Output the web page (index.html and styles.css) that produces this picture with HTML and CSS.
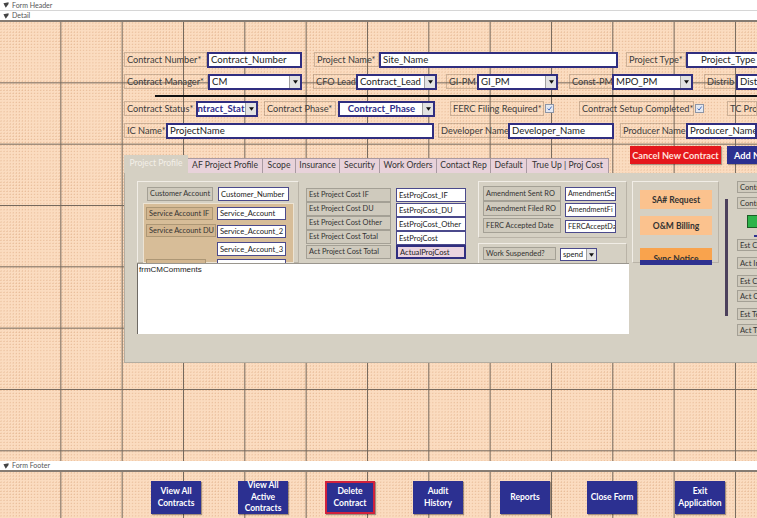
FILE: index.html
```html
<!DOCTYPE html>
<html>
<head>
<meta charset="utf-8">
<title>Contract Form - Design View</title>
<link rel="stylesheet" href="styles.css">
</head>
<body>
<div class="designer">
  <div class="bar"><svg class="sec-ico" viewBox="0 0 7 7"><path d="M0.5 1.5 L6.5 0.3 L6.5 2.2 L3.2 6.6 Z" fill="#444"/></svg>Form Header</div>
  <div class="bar strong"><svg class="sec-ico" viewBox="0 0 7 7"><path d="M0.5 1.5 L6.5 0.3 L6.5 2.2 L3.2 6.6 Z" fill="#444"/></svg>Detail</div>

  <div class="canvas detail">
    <!-- row 1 -->
    <div class="c lbl l-cnum">Contract Number*</div>
    <div class="c txt t-cnum">Contract_Number</div>
    <div class="c lbl l-pname">Project Name*</div>
    <div class="c txt t-site">Site_Name</div>
    <div class="c lbl l-ptype">Project Type*</div>
    <div class="c txt t-ptype">Project_Type</div>

    <!-- row 2 -->
    <div class="c lbl l-cm">Contract Manager*</div>
    <div class="c txt cbo c-cm">CM<span class="dd"><svg viewBox="0 0 6 4"><path d="M0 0H6L3 4Z" fill="#111"/></svg></span></div>
    <div class="c lbl l-cfo">CFO Lead</div>
    <div class="c txt cbo c-lead">Contract_Lead<span class="dd"><svg viewBox="0 0 6 4"><path d="M0 0H6L3 4Z" fill="#111"/></svg></span></div>
    <div class="c lbl l-gipm">GI-PM</div>
    <div class="c txt cbo c-gipm">GI_PM<span class="dd"><svg viewBox="0 0 6 4"><path d="M0 0H6L3 4Z" fill="#111"/></svg></span></div>
    <div class="c lbl l-cpm">Const-PM</div>
    <div class="c txt cbo c-mpo">MPO_PM<span class="dd"><svg viewBox="0 0 6 4"><path d="M0 0H6L3 4Z" fill="#111"/></svg></span></div>
    <div class="c lbl l-dist">Distrib</div>
    <div class="c txt t-dist">Distri</div>

    <div class="c hline"></div>

    <!-- row 3 -->
    <div class="c lbl l-cstat">Contract Status*</div>
    <div class="c txt cbo navy c-cstat"><span class="shift">ontract_Stat</span><span class="dd"><svg viewBox="0 0 6 4"><path d="M0 0H6L3 4Z" fill="#111"/></svg></span></div>
    <div class="c lbl l-cphase">Contract Phase*</div>
    <div class="c txt cbo navy center c-cphase">Contract_Phase<span class="dd"><svg viewBox="0 0 6 4"><path d="M0 0H6L3 4Z" fill="#111"/></svg></span></div>
    <div class="c lbl l-ferc">FERC Filing Required*</div>
    <div class="c chk chk-ferc"><svg viewBox="0 0 9 9"><path d="M2 4.5 L4 6.5 L7.2 2" stroke="#3a63b8" stroke-width="1.2" fill="none"/></svg></div>
    <div class="c lbl l-setup">Contract Setup Completed*</div>
    <div class="c chk chk-setup"><svg viewBox="0 0 9 9"><path d="M2 4.5 L4 6.5 L7.2 2" stroke="#3a63b8" stroke-width="1.2" fill="none"/></svg></div>
    <div class="c lbl l-tc">TC Pro</div>

    <!-- row 4 -->
    <div class="c lbl l-ic">IC Name*</div>
    <div class="c txt t-ic">ProjectName</div>
    <div class="c lbl l-dev">Developer Name</div>
    <div class="c txt t-dev">Developer_Name</div>
    <div class="c lbl l-prod">Producer Name</div>
    <div class="c txt t-prod">Producer_Name</div>

    <div class="c btn b-cancel">Cancel New Contract</div>
    <div class="c btn b-add">Add N</div>

    <!-- tab control -->
    <div class="c tabctl">
      <div class="tabstrip">
        <div class="tab sel w-pp">Project Profile</div>
        <div class="tab w-af">AF Project Profile</div>
        <div class="tab w-sc">Scope</div>
        <div class="tab w-in">Insurance</div>
        <div class="tab w-se">Security</div>
        <div class="tab w-wo">Work Orders</div>
        <div class="tab w-cr">Contact Rep</div>
        <div class="tab w-de">Default</div>
        <div class="tab w-tu">True Up | Proj Cost</div>
      </div>
      <div class="tabpage">
        <div class="c frame fr-a"></div>
        <div class="c plbl p-cust">Customer Account</div>
        <div class="c ptxt pt-cust">Customer_Number</div>

        <div class="c tan"></div>
        <div class="c plbl tanlbl p-sif">Service Account IF</div>
        <div class="c plbl tanlbl p-sdu">Service Account DU</div>
        <div class="c plbl tanlbl p-s4"></div>
        <div class="c ptxt pt-s1">Service_Account</div>
        <div class="c ptxt pt-s2">Service_Account_2</div>
        <div class="c ptxt pt-s3">Service_Account_3</div>
        <div class="c ptxt pt-s4"></div>

        <div class="c plbl p-m1">Est Project Cost IF</div>
        <div class="c plbl p-m2">Est Project Cost DU</div>
        <div class="c plbl p-m3">Est Project Cost Other</div>
        <div class="c plbl p-m4">Est Project Cost Total</div>
        <div class="c plbl p-m5">Act Project Cost Total</div>
        <div class="c ptxt pt-m1">EstProjCost_IF</div>
        <div class="c ptxt pt-m2">EstProjCost_DU</div>
        <div class="c ptxt pt-m3">EstProjCost_Other</div>
        <div class="c ptxt pt-m4">EstProjCost</div>
        <div class="c ptxt pink pt-m5">ActualProjCost</div>

        <div class="c frame fr-b"></div>
        <div class="c plbl p-a1">Amendment Sent RO</div>
        <div class="c plbl p-a2">Amendment Filed RO</div>
        <div class="c plbl p-a3">FERC Accepted Date</div>
        <div class="c ptxt small pt-a1">AmendmentSe</div>
        <div class="c ptxt small pt-a2">AmendmentFi</div>
        <div class="c ptxt small pt-a3">FERCAcceptDa</div>

        <div class="c frame fr-c"></div>
        <div class="c plbl p-ws">Work Suspended?</div>
        <div class="c ptxt pcbo pt-ws">spend<span class="dd"><svg viewBox="0 0 6 4"><path d="M0 0H6L3 4Z" fill="#111"/></svg></span></div>

        <div class="c frame fr-d"></div>
        <div class="c obtn ob-sa">SA# Request</div>
        <div class="c obtn ob-om">O&amp;M Billing</div>
        <div class="c obtn sync ob-sy">Sync Notice</div>
        <div class="c navybar"></div>

        <div class="c vline"></div>

        <div class="c plbl r-1">Contra</div>
        <div class="c plbl r-2">Contra</div>
        <div class="c greenbtn"></div>
        <div class="c dash"></div>
        <div class="c plbl r-3">Est Co</div>
        <div class="c plbl r-4">Act In</div>
        <div class="c plbl r-5">Est CO</div>
        <div class="c plbl r-6">Act CO</div>
        <div class="c plbl r-7">Est Te</div>
        <div class="c plbl r-8">Act Te</div>

        <div class="c comments">frmCMComments</div>
      </div>
    </div>
  </div>

  <div class="bar strong"><svg class="sec-ico" viewBox="0 0 7 7"><path d="M0.5 1.5 L6.5 0.3 L6.5 2.2 L3.2 6.6 Z" fill="#444"/></svg>Form Footer</div>

  <div class="canvas footer">
    <div class="c fb f1">View All<br>Contracts</div>
    <div class="c fb f2">View All<br>Active<br>Contracts</div>
    <div class="c fb del f3">Delete<br>Contract</div>
    <div class="c fb f4">Audit<br>History</div>
    <div class="c fb f5">Reports</div>
    <div class="c fb f6">Close Form</div>
    <div class="c fb f7">Exit<br>Application</div>
  </div>
</div>
</body>
</html>
```

FILE: styles.css
```css
* { box-sizing: border-box; margin: 0; padding: 0; }
html, body { width: 757px; height: 518px; overflow: hidden; background: #fff; }
body { font-family: Lato, "Liberation Sans", sans-serif; color: #333; }

.designer { display: flex; flex-direction: column; width: 757px; height: 518px; }

.bar {
  flex: 0 0 11px; height: 11px; background: #fff;
  border-bottom: 1px solid #d6d6d6;
  display: flex; align-items: center; gap: 3px; padding-left: 3px;
  font-size: 7px; color: #555; line-height: 1;
}
.bar.strong { border-bottom: 2px solid #867c73; }
.sec-ico { width: 6px; height: 6px; }

.canvas {
  position: relative; overflow: hidden; flex-shrink: 0;
  background-color: #fbdcc0;
  background-image:
    linear-gradient(to right, transparent 60.33px, #74685c 60.33px, #74685c 61.33px, transparent 61.33px),
    linear-gradient(to bottom, transparent 60.33px, #74685c 60.33px, #74685c 61.33px, transparent 61.33px),
    radial-gradient(circle at 1px 1px, rgba(215,160,118,.55) 0.55px, transparent 0.85px);
  background-size: 61.333px 61.333px, 61.333px 61.333px, 3.0667px 3.0667px;
}
.detail { height: 439px; }
.footer { height: 46px; }

.c { position: absolute; white-space: nowrap; overflow: hidden; }

/* labels / textboxes on the form canvas */
.lbl {
  height: 15px; border: 1px solid rgba(120,100,80,.35);
  font-size: 9.2px; line-height: 13px; padding: 0 2px; color: #3d3d3d;
}
.txt {
  height: 16px; background: #fff; border: 2px solid #302e80;
  font-size: 9.6px; line-height: 12px; padding: 0 2px; color: #222;
}
.cbo { padding-right: 12px; }
.dd {
  position: absolute; right: 0; top: 0; bottom: 0; width: 11px;
  background: #e2e2e2; border-left: 1px solid #a0a0a0;
  display: flex; align-items: center; justify-content: center;
}
.dd svg { width: 5px; height: 4px; }
.navy { color: #2f2d8a; font-weight: bold; }
.center { text-align: center; }
.shift { display: inline-block; margin-left: -8px; }

.chk {
  width: 9px; height: 9px; background: #e4e8f0; border: 1px solid #8d95a6;
}
.chk svg { width: 7px; height: 7px; display: block; }

.hline { left: 155px; top: 73px; width: 610px; height: 2px; background: #111; }

/* row 1 */
.l-cnum { left: 124px; top: 30px; width: 83px; }
.t-cnum { left: 207px; top: 30px; width: 95px; }
.l-pname { left: 314px; top: 30px; width: 65px; }
.t-site { left: 379px; top: 30px; width: 239px; }
.l-ptype { left: 626px; top: 30px; width: 60px; }
.t-ptype { left: 686px; top: 30px; width: 80px; padding-left: 13px; }
/* row 2 */
.l-cm { left: 124px; top: 52px; width: 84px; }
.c-cm { left: 208px; top: 52px; width: 94px; }
.l-cfo { left: 313px; top: 52px; width: 44px; }
.c-lead { left: 356px; top: 52px; width: 81px; }
.l-gipm { left: 446px; top: 52px; width: 32px; }
.c-gipm { left: 477px; top: 52px; width: 81px; }
.l-cpm { left: 569px; top: 52px; width: 44px; }
.c-mpo { left: 612px; top: 52px; width: 81px; }
.l-dist { left: 704px; top: 52px; width: 33px; }
.t-dist { left: 736px; top: 52px; width: 40px; }
/* row 3 */
.l-cstat { left: 124px; top: 79px; width: 73px; }
.c-cstat { left: 196px; top: 79px; width: 62px; }
.l-cphase { left: 264px; top: 79px; width: 72px; }
.c-cphase { left: 338px; top: 79px; width: 97px; }
.l-ferc { left: 450px; top: 79px; width: 94px; }
.chk-ferc { left: 545px; top: 82px; }
.l-setup { left: 579px; top: 79px; width: 115px; }
.chk-setup { left: 695px; top: 82px; }
.l-tc { left: 727px; top: 79px; width: 30px; }
/* row 4 */
.l-ic { left: 124px; top: 101px; width: 43px; }
.t-ic { left: 166px; top: 101px; width: 268px; }
.l-dev { left: 438px; top: 101px; width: 72px; }
.t-dev { left: 508px; top: 101px; width: 106px; }
.l-prod { left: 620px; top: 101px; width: 68px; }
.t-prod { left: 686px; top: 101px; width: 71px; }

.btn {
  top: 124px; height: 18px; font-size: 9.2px; font-weight: bold;
  display: flex; align-items: center; justify-content: center;
  box-shadow: 1px 1px 1px rgba(0,0,0,.3);
}
.b-cancel { left: 630px; width: 91px; background: #e5171c; color: #ffe2dc; }
.b-add { left: 727px; width: 30px; background: #2c3090; color: #fff; justify-content: flex-start; padding-left: 7px; }

/* tab control */
.tabctl { left: 124px; top: 133px; width: 633px; height: 208px; overflow: hidden; }
.tabstrip { display: flex; height: 18px; align-items: flex-end; }
.tab {
  height: 15px; background: #e8d2da; border: 1px solid #a99aa2; border-bottom: none;
  font-size: 8.6px; line-height: 13px; text-align: center; color: #333; white-space: nowrap;
  flex-shrink: 0;
}
.tab + .tab { border-left: none; }
.tab.sel { height: 18px; background: #d5d0c3; border: none; color: #f3efe8; line-height: 17px; }
.w-pp { width: 64px; }
.w-af { width: 75px; }
.w-sc { width: 33px; }
.w-in { width: 44px; }
.w-se { width: 40px; }
.w-wo { width: 57px; }
.w-cr { width: 54px; }
.w-de { width: 36px; }
.w-tu { width: 82px; }
.tabpage {
  position: relative; height: 190px; background: #d5d0c3;
  border-left: 1px solid #b3ada1; border-bottom: 1px solid #b3ada1;
}

.frame { border: 1px solid #f1ede6; border-right-color: #b9b3a7; border-bottom-color: #b9b3a7; }
.fr-a { left: 12px; top: 8px; width: 162px; height: 82px; }
.fr-b { left: 353px; top: 8px; width: 149px; height: 57px; }
.fr-c { left: 353px; top: 70px; width: 149px; height: 22px; }
.fr-d { left: 507px; top: 8px; width: 87px; height: 82px; }

.plbl {
  height: 14px; background: #cfcabd; border: 1px solid #a4a095;
  font-size: 7.4px; line-height: 12px; padding: 0 2px; color: #333;
}
.ptxt {
  height: 14px; background: #fff; border: 1px solid #4b4a8c;
  font-size: 7.6px; line-height: 12px; padding: 0 2px; color: #222;
}
.ptxt.small { font-size: 7.2px; }
.pink { background: #ead4e0; border: 2px solid #302e80; line-height: 10px; }

.p-cust { left: 22px; top: 14px; width: 66px; }
.pt-cust { left: 93px; top: 14px; width: 71px; }
.tan { left: 18px; top: 30px; width: 151px; height: 60px; background: #d7bd98; border: 1px solid #ece3d3; }
.tanlbl { background: #d2b690; border-color: #ad9775; }
.p-sif { left: 21px; top: 34px; width: 67px; height: 13px; line-height: 11px; }
.p-sdu { left: 21px; top: 51px; width: 70px; height: 13px; line-height: 11px; }
.p-s4 { left: 21px; top: 86px; width: 60px; }
.pt-s1 { left: 92px; top: 34px; width: 69px; height: 13px; line-height: 11px; }
.pt-s2 { left: 92px; top: 52px; width: 69px; height: 13px; line-height: 11px; }
.pt-s3 { left: 92px; top: 69px; width: 69px; height: 14px; }
.pt-s4 { left: 92px; top: 86px; width: 69px; }

.p-m1 { left: 181px; top: 15px; width: 85px; }
.p-m2 { left: 181px; top: 29px; width: 85px; }
.p-m3 { left: 181px; top: 43px; width: 85px; }
.p-m4 { left: 181px; top: 57px; width: 85px; }
.p-m5 { left: 181px; top: 72px; width: 85px; }
.pt-m1 { left: 271px; top: 15px; width: 70px; }
.pt-m2 { left: 271px; top: 30px; width: 70px; }
.pt-m3 { left: 271px; top: 44px; width: 70px; }
.pt-m4 { left: 271px; top: 58px; width: 70px; }
.pt-m5 { left: 271px; top: 72px; width: 70px; }

.p-a1 { left: 358px; top: 13px; width: 78px; height: 15px; line-height: 13px; }
.p-a2 { left: 358px; top: 28px; width: 78px; height: 15px; line-height: 13px; }
.p-a3 { left: 358px; top: 45px; width: 78px; height: 15px; line-height: 13px; }
.pt-a1 { left: 440px; top: 14px; width: 51px; }
.pt-a2 { left: 440px; top: 30px; width: 51px; }
.pt-a3 { left: 440px; top: 47px; width: 51px; height: 13px; line-height: 11px; }

.p-ws { left: 358px; top: 74px; width: 73px; height: 13px; line-height: 11px; }
.pcbo { padding-right: 11px; }
.pt-ws { left: 435px; top: 75px; width: 37px; height: 13px; line-height: 11px; }
.pt-ws .dd { width: 10px; }

.obtn {
  height: 19px; width: 72px; left: 515px; background: #fbc28e;
  font-size: 8.5px; font-weight: bold; color: #333;
  display: flex; align-items: center; justify-content: center;
}
.ob-sa { top: 17px; }
.ob-om { top: 43px; }
.sync { top: 75px; height: 16px; background: #f9a34d; align-items: flex-end; }
.navybar { left: 515px; top: 87px; width: 72px; height: 5px; background: #2e3190; }

.vline { left: 600px; top: 26px; width: 3px; height: 117px; background: #4c405c; }

.r-1, .r-2, .r-3, .r-4, .r-5, .r-6, .r-7, .r-8 { left: 612px; width: 22px; height: 12px; line-height: 10px; font-size: 7.6px; border-right: none; }
.r-1 { top: 8px; }
.r-2 { top: 24px; }
.r-3 { top: 66px; }
.r-4 { top: 84px; }
.r-5 { top: 102px; }
.r-6 { top: 117px; }
.r-7 { top: 135px; }
.r-8 { top: 151px; }
.greenbtn { left: 622px; top: 42px; width: 12px; height: 13px; background: #2db34a; border: 1px solid #1c5e25; border-right: none; }
.dash { left: 629px; top: 62px; width: 5px; height: 2px; background: #2e3190; }

.comments {
  left: 12px; top: 90px; width: 492px; height: 71px; background: #fff;
  border-top: 1px solid #9a968e; border-left: 1px solid #6e6a64;
  font-family: "Liberation Sans", Arial, sans-serif; font-size: 8px; line-height: 11px;
  padding: 0 1px; color: #222;
}

/* footer buttons */
.fb {
  top: 9px; height: 33px; width: 50px; background: #2c3091; color: #fff;
  font-size: 8.5px; font-weight: bold; line-height: 11.5px; text-align: center;
  display: flex; align-items: center; justify-content: center; overflow: visible;
  box-shadow: 1px 1px 1px rgba(0,0,0,.35);
}
.del { border: 2px solid #d0213c; }
.f1 { left: 151px; }
.f2 { left: 238px; }
.f3 { left: 325px; }
.f4 { left: 413px; }
.f5 { left: 500px; }
.f6 { left: 587px; }
.f7 { left: 675px; }
```
